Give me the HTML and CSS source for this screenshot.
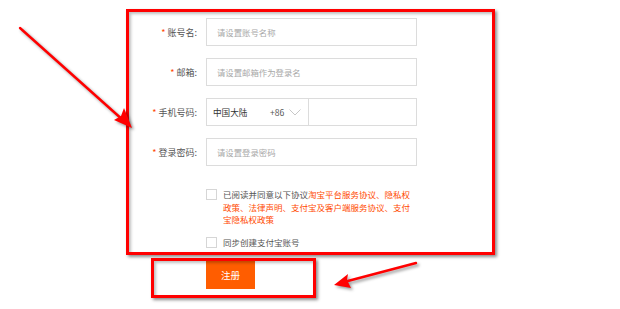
FILE: index.html
```html
<!DOCTYPE html>
<html lang="zh-CN">
<head>
<meta charset="utf-8">
<title>注册</title>
<link rel="stylesheet" href="styles.css">
</head>
<body>
<div class="page">
  <form class="form">
    <div class="row">
      <label class="lbl"><span class="req">*</span>账号名:</label>
      <input class="field" type="text" placeholder="请设置账号名称">
    </div>
    <div class="row">
      <label class="lbl"><span class="req">*</span>邮箱:</label>
      <input class="field" type="text" placeholder="请设置邮箱作为登录名">
    </div>
    <div class="row">
      <label class="lbl"><span class="req">*</span>手机号码:</label>
      <div class="phone">
        <div class="country">
          <span class="cname">中国大陆</span>
          <span class="code">+86</span>
          <svg class="chev" width="12" height="7" viewBox="0 0 12 7"><path d="M0.5 0.5 L6 6 L11.5 0.5" fill="none" stroke="#c8c8c8" stroke-width="1"/></svg>
        </div>
        <input class="pinput" type="text">
      </div>
    </div>
    <div class="row">
      <label class="lbl"><span class="req">*</span>登录密码:</label>
      <input class="field" type="password" placeholder="请设置登录密码">
    </div>
    <div class="check agree">
      <span class="box"></span>
      <p class="ctext"><span class="plain">已阅读并同意以下协议</span><span class="link">淘宝平台服务协议、隐私权</span><br><span class="link">政策、法律声明、支付宝及客户端服务协议、支付</span><br><span class="link">宝隐私权政策</span></p>
    </div>
    <div class="check sync">
      <span class="box"></span>
      <p class="ctext">同步创建支付宝账号</p>
    </div>
    <button class="submit" type="button">注册</button>
  </form>

  <div class="mark mark-form"></div>
  <div class="mark mark-btn"></div>
  <svg class="arrows" width="620" height="309" viewBox="0 0 620 309">
    <g class="arrow">
      <line x1="20" y1="28" x2="124" y2="121" stroke="#ff0000" stroke-width="2.4" stroke-linecap="round"/>
      <polygon points="132,128 114,120 121,116 124,108" fill="#ff0000"/>
    </g>
    <g class="arrow">
      <line x1="416" y1="263" x2="344" y2="282" stroke="#ff0000" stroke-width="2.4" stroke-linecap="round"/>
      <polygon points="334,285 348,274 347,280 351,288" fill="#ff0000"/>
    </g>
  </svg>
</div>
</body>
</html>
```
FILE: styles.css
```css
* { box-sizing: border-box; }
html, body { margin: 0; padding: 0; background: #fff; }
body {
  font-family: "Noto Sans CJK SC", "Noto Sans", sans-serif;
  color: #444;
}
.page {
  position: relative;
  width: 620px;
  height: 309px;
  overflow: hidden;
}
.form {
  margin: 0;
  padding-top: 18px;
  display: flex;
  flex-direction: column;
}
.row {
  display: flex;
  align-items: center;
  height: 28px;
  margin-bottom: 12px;
}
.row:nth-child(4) { margin-bottom: 0; }
.lbl {
  width: 197px;
  margin-right: 9px;
  text-align: right;
  font-size: 9px;
  color: #555;
  white-space: nowrap;
}
.req {
  color: #ff4400;
  margin-right: 2px;
}
.field, .phone {
  width: 211px;
  height: 28px;
  border: 1px solid #dcdcdc;
  background: #fff;
  outline: none;
}
.field {
  padding: 0 0 0 10px;
  font-family: inherit;
  font-size: 8.4px;
  color: #333;
}
.field::placeholder { color: #a8a8a8; }
.phone {
  display: flex;
}
.country {
  width: 102px;
  display: flex;
  align-items: center;
  border-right: 1px solid #dcdcdc;
  padding-left: 6px;
  font-size: 8.6px;
  color: #333;
}
.cname { width: 57px; }
.code { font-size: 8.6px; color: #555; }
.chev { margin-left: 5px; margin-top: 1px; }
.pinput {
  flex: 1;
  border: none;
  outline: none;
  min-width: 0;
  background: transparent;
}
.check {
  display: flex;
  align-items: flex-start;
  margin-left: 206px;
}
.agree { margin-top: 23px; }
.sync { margin-top: 11px; }
.box {
  width: 11px;
  height: 11px;
  border: 1px solid #d6d6d6;
  background: #fff;
  margin-right: 6px;
  flex: none;
}
.ctext {
  margin: -1px 0 0;
  width: 196px;
  font-size: 8.5px;
  line-height: 12.5px;
  color: #555;
  white-space: nowrap;
}
.link { color: #ff4a00; }
.submit {
  margin: 13px 0 0 206px;
  width: 49px;
  height: 28px;
  border: none;
  background: #ff5d00;
  color: #fff;
  font-family: inherit;
  font-size: 9.5px;
  padding: 0;
  align-self: flex-start;
}
.mark {
  position: absolute;
  border: 3px solid #ff0000;
  box-shadow: 2px 2px 3px rgba(0, 0, 0, 0.45), inset 2px 2px 3px rgba(0, 0, 0, 0.25);
  pointer-events: none;
}
.mark-form {
  left: 126px;
  top: 9px;
  width: 369px;
  height: 246px;
}
.mark-btn {
  left: 151px;
  top: 258px;
  width: 165px;
  height: 40px;
}
.arrows {
  position: absolute;
  left: 0;
  top: 0;
  pointer-events: none;
}
.arrow { filter: drop-shadow(2px 2px 1.5px rgba(0, 0, 0, 0.4)); }
```
